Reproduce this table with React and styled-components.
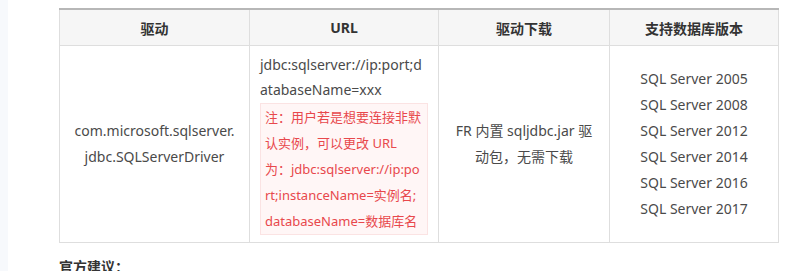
import styled, { createGlobalStyle } from 'styled-components';

const GlobalStyle = createGlobalStyle`
    html, body {
        margin: 0;
        padding: 0;
        background: #fff;
    }
    body {
        font-family: "Noto Sans", "Noto Sans CJK SC", sans-serif;
        color: #4a4a4a;
        font-size: 14px;
    }
`;

const Page = styled.div`
    display: flex;
    width: 788px;
    height: 271px;
    overflow: hidden;
`;

const SideEdge = styled.aside`
    width: 8px;
    flex-shrink: 0;
    background: #f7f9fc;
`;

const Content = styled.main`
    padding: 8px 0 0 51px;
`;

const Table = styled.table`
    width: 719px;
    table-layout: fixed;
    border-collapse: collapse;
    border-top: 2px solid #b7b7b7;
`;

const HeadCell = styled.th`
    height: 35px;
    padding: 0 10px;
    background: #f6f6f6;
    border: 1px solid #dedede;
    border-top: none;
    color: #333;
    font-size: 14px;
    font-weight: 700;
    text-align: center;
    vertical-align: middle;
`;

const Cell = styled.td`
    height: 190px;
    padding: 0 10px;
    border: 1px solid #dedede;
    line-height: 26px;
    text-align: ${({ $left }) => ($left ? 'left' : 'center')};
    vertical-align: ${({ $top }) => ($top ? 'top' : 'middle')};
    padding-top: ${({ $top }) => ($top ? '6px' : '0')};
    word-break: break-all;
    color: #4a4a4a;
`;

const UrlText = styled.div`
    line-height: 25px;
    margin-bottom: 1px;
`;

const Notice = styled.div`
    padding: 0 4px;
    background: #fff6f6;
    border: 1px solid #fbe3e3;
    color: #e8484c;
    font-size: 13px;
    line-height: 26px;
`;

const VersionList = styled.ul`
    margin: 0;
    padding: 0;
    list-style: none;
`;

const Advice = styled.h4`
    margin: 14px 0 0;
    color: #333;
    font-size: 14px;
    font-weight: 700;
    line-height: 20px;
`;

const versions = ['2005', '2008', '2012', '2014', '2016', '2017'];

const App = () => {
    return (
        <>
            <GlobalStyle />
            <Page>
                <SideEdge />
                <Content>
                    <Table>
                        <colgroup>
                            <col style={{ width: 190 }} />
                            <col style={{ width: 189 }} />
                            <col style={{ width: 171 }} />
                            <col style={{ width: 169 }} />
                        </colgroup>
                        <thead>
                            <tr>
                                <HeadCell>驱动</HeadCell>
                                <HeadCell>URL</HeadCell>
                                <HeadCell>驱动下载</HeadCell>
                                <HeadCell>支持数据库版本</HeadCell>
                            </tr>
                        </thead>
                        <tbody>
                            <tr>
                                <Cell>com.microsoft.sqlserver.<br />jdbc.SQLServerDriver</Cell>
                                <Cell $left $top>
                                    <UrlText>jdbc:sqlserver://ip:port;databaseName=xxx</UrlText>
                                    <Notice>
                                        注：用户若是想要连接非默认实例，可以更改 URL 为：jdbc:sqlserver://ip:port;instanceName=实例名;databaseName=数据库名
                                    </Notice>
                                </Cell>
                                <Cell>FR 内置 sqljdbc.jar 驱动包，无需下载</Cell>
                                <Cell>
                                    <VersionList>
                                        {versions.map((v) => (
                                            <li key={v}>SQL Server {v}</li>
                                        ))}
                                    </VersionList>
                                </Cell>
                            </tr>
                        </tbody>
                    </Table>
                    <Advice>官方建议：</Advice>
                </Content>
            </Page>
        </>
    );
};

export default App;
